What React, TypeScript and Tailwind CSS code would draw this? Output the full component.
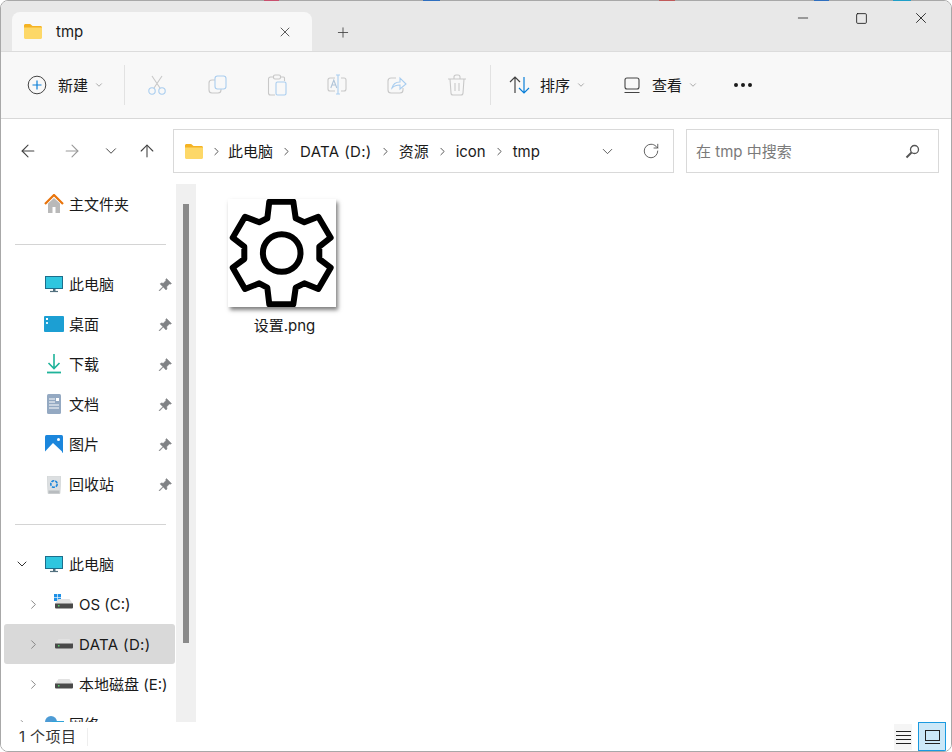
import { Plus, X, Minus, Square, ChevronRight, ChevronDown, ArrowLeft, ArrowRight, ArrowUp, RotateCw, MoreHorizontal } from 'lucide-react';
import type { ReactNode } from 'react';

const FolderIcon = () => (
  <svg width="18" height="15" viewBox="0 0 19 15" preserveAspectRatio="none">
    <path d="M0 1.500C0 .7.7 0 1.500 0h5L9 2h8.500c.8 0 1.500.7 1.500 1.500V6H0z" fill="#f5b323" />
    <path d="M0 3.500h19v10c0 .8-.7 1.500-1.500 1.500h-16C.7 15 0 14.300 0 13.500z" fill="#fdd868" />
  </svg>
);

const HomeIcon = () => (
  <svg width="20" height="20" viewBox="0 0 20 20">
    <path d="M4 9.500V19h4.500v-6h3v6H16V9.500L10 4z" fill="#b9b9b9" />
    <path d="M1 10l9-9 9 9" fill="none" stroke="#e9740c" strokeWidth="2.200" />
  </svg>
);

const MonitorIcon = () => (
  <svg width="20" height="17" viewBox="0 0 20 17">
    <rect x="1.500" y="0.500" width="17" height="12" fill="#2fc6df" stroke="#1c6e8c" />
    <path d="M9 13h2.500v2H9z" fill="#52707f" />
    <path d="M6 15.500h8" stroke="#52707f" strokeWidth="1.200" />
  </svg>
);

const DesktopIcon = () => (
  <svg width="20" height="16" viewBox="0 0 20 16">
    <rect width="20" height="16" rx="1" fill="#1c9fd3" />
    <rect x="2" y="2" width="2" height="2" fill="#fff" />
    <rect x="2" y="6" width="2" height="2" fill="#d8f2fb" />
  </svg>
);

const DownloadIcon = () => (
  <svg width="16" height="20" viewBox="0 0 16 20">
    <path d="M8 0v14M2.500 9L8 14.500 13.500 9" fill="none" stroke="#1fb39a" strokeWidth="1.600" />
    <path d="M1 18.500h14" stroke="#1fb39a" strokeWidth="1.800" />
  </svg>
);

const DocIcon = () => (
  <svg width="14" height="20" viewBox="0 0 14 20">
    <rect width="14" height="20" rx="1.500" fill="#94a9c2" />
    <path d="M2 5h6M2 8h6M2 11h10M2 14h10" stroke="#fff" strokeWidth="1" />
    <rect x="9" y="4" width="3" height="3" fill="#fff" />
  </svg>
);

const PictureIcon = () => (
  <svg width="18" height="18" viewBox="0 0 18 18">
    <rect width="18" height="18" rx="1.500" fill="#1b86dc" />
    <path d="M0 16.500L8 8l9 8.500V18H0z" fill="#fff" />
    <circle cx="13.500" cy="4.500" r="1.500" fill="#fff" />
  </svg>
);

const BinIcon = () => (
  <svg width="14" height="19" viewBox="0 0 14 19">
    <path d="M0 1.500h14L13 18.500H1z" fill="#dcdfe1" stroke="#c4c8ca" strokeWidth="0.500" />
    <path d="M1.500 15.500h11v3h-11z" fill="#b8bcbf" />
    <circle cx="7" cy="9" r="3.200" fill="none" stroke="#1b86dc" strokeWidth="1.600" strokeDasharray="3 1" />
  </svg>
);

const PinIcon = () => (
  <svg width="14" height="14" viewBox="0 0 14 14">
    <path d="M8.500.500l5 5-1.300.8-.8-.3-2.700 2.700.3 2.200-1 1L5.200 9 1.500 13 1 12.500 4.900 8.700 2.100 5.900l1-1 2.200.3L8 2.500l-.3-.8z" fill="#808285" stroke="#808285" strokeWidth="0.500" />
  </svg>
);

const DriveIcon = ({ win }: { win?: boolean }) => (
  <svg width="20" height="18" viewBox="0 0 20 18" className="overflow-visible">
    {win && (
      <g fill="#1e90e6">
        <rect x="0" y="-1" width="3.200" height="3.200" />
        <rect x="3.800" y="-1" width="3.200" height="3.200" />
        <rect x="0" y="2.800" width="3.200" height="3.200" />
        <rect x="3.800" y="2.800" width="3.200" height="3.200" />
      </g>
    )}
    <path d="M4.500 4h11L19 9H1z" fill="#e2e2e2" />
    <path d="M1 8.500h18v4a1 1 0 01-1 1H2a1 1 0 01-1-1z" fill="#4a4a4a" />
    <rect x="4" y="10" width="1.500" height="1.500" fill="#55d46a" />
  </svg>
);

const ToolGlyph = ({ children }: { children: ReactNode }) => (
  <svg width="20" height="22" viewBox="0 0 20 22" fill="none" strokeWidth="1.100">
    {children}
  </svg>
);

const NavRow = ({ icon, label, pin }: { icon: ReactNode; label: string; pin?: boolean }) => (
  <div className="flex h-10 items-center">
    <div className="flex w-[68px] shrink-0 justify-end pr-[5px]">
      <div className="flex w-5 justify-center">{icon}</div>
    </div>
    <span className="flex-1">{label}</span>
    {pin && (
      <span className="mr-1 flex w-[14px] justify-center">
        <PinIcon />
      </span>
    )}
  </div>
);

const DriveRow = ({ label, win, active, wide }: { label: string; win?: boolean; active?: boolean; wide?: boolean }) => (
  <div className={`ml-[3px] flex h-10 w-[171px] items-center rounded-[3px] ${active ? 'bg-[#d9d9d9]' : ''}`}>
    <ChevronRight size={15} strokeWidth={1.500} className="ml-[22px] text-[#808080]" />
    <div className="ml-[13px] flex w-5 justify-center">
      <DriveIcon win={win} />
    </div>
    <span className={`ml-[5px] whitespace-nowrap ${wide ? 'tracking-[0.35px]' : ''}`}>{label}</span>
  </div>
);

const Crumb = ({ label, wide }: { label: string; wide?: boolean }) => (
  <>
    <span className={wide ? 'tracking-[0.35px]' : ''}>{label}</span>
    <ChevronRight size={13} strokeWidth={1.800} className="mx-[7px] text-[#555]" />
  </>
);

// bits of the desktop that show above the window edge
const desktopBits = [
  'left-[264px] w-[15px] bg-[#c8506e]',
  'left-[423px] w-[17px] bg-[#2f6fbf]',
  'left-[659px] w-[16px] bg-[#c05a5a]',
  'left-[814px] w-[15px] bg-[#2f6fbf]',
  'left-[893px] w-[18px] bg-[#1f9fc8]',
];

export default function App() {
  return (
    <div className="relative h-[752px] w-[952px] overflow-hidden bg-white font-['Inter','Noto_Sans_CJK_SC',sans-serif] text-[15px] text-[#1a1a1a] [&_span]:pt-[2px]">
      {desktopBits.map((cls) => (
        <div key={cls} className={`absolute top-0 h-px ${cls}`} />
      ))}
      <div className="flex h-full flex-col overflow-hidden rounded-[8px] border border-[#a8a8a8]">
        {/* title bar */}
        <div className="flex h-[50px] shrink-0 items-end bg-[#e8e8e8] pl-[11px]">
          <div className="flex h-[39px] w-[300px] items-center rounded-t-[8px] bg-[#f8f8f8] pl-[12px]">
            <FolderIcon />
            <span className="ml-[14px] flex-1">tmp</span>
            <X size={16} strokeWidth={1.100} className="mr-[19px] text-[#222]" />
          </div>
          <div className="mb-[11px] ml-[23px] flex h-4 w-4 items-center justify-center">
            <Plus size={17} strokeWidth={1.300} className="text-[#444]" />
          </div>
          <div className="mb-[24px] ml-auto flex items-center text-[#111]">
            <Minus size={16} strokeWidth={1.100} className="mr-[44px]" />
            <Square size={13} strokeWidth={1.500} className="mr-[44px]" />
            <X size={18} strokeWidth={1.100} className="mr-[21px]" />
          </div>
        </div>

        {/* command bar */}
        <div className="flex h-[68px] shrink-0 items-center border-t border-b border-t-[#dcdcdc] border-b-[#d8d8d8] bg-[#f8f8f8]">
          <svg width="20" height="20" viewBox="0 0 20 20" className="ml-[26px]" fill="none">
            <circle cx="10" cy="10" r="8.800" stroke="#444" strokeWidth="1" />
            <path d="M10 5.500v9M5.500 10h9" stroke="#0a7fd8" strokeWidth="1.200" />
          </svg>
          <span className="ml-[11px]">新建</span>
          <ChevronDown size={10} strokeWidth={1.300} className="ml-[6px] text-[#666]" />
          <div className="ml-[20px] h-10 w-px bg-[#e2e2e2]" />
          <div className="ml-[22px] flex w-[350px] items-center">
            <div className="flex w-[20px] justify-center">
              <ToolGlyph>
                <path d="M5 2l8 12M15 2L7 14" stroke="#c8c8c8" />
                <circle cx="5" cy="17" r="3.200" stroke="#a9cdef" />
                <circle cx="15" cy="17" r="3.200" stroke="#a9cdef" />
              </ToolGlyph>
            </div>
            <div className="ml-[41px] flex w-[20px] justify-center">
              <ToolGlyph>
                <rect x="1" y="6" width="12" height="13" rx="3" stroke="#c8c8c8" />
                <rect x="7" y="2" width="11" height="13" rx="2.500" fill="#f8f8f8" stroke="#a9cdef" />
              </ToolGlyph>
            </div>
            <div className="ml-[39px] flex w-[20px] justify-center">
              <ToolGlyph>
                <path d="M7 3H3.500A2 2 0 001.500 5v14a2 2 0 002 2H8M13 3h3.500a1 1 0 011 1v3" stroke="#c8c8c8" />
                <rect x="6.500" y="1" width="7" height="4" rx="1.500" stroke="#c8c8c8" />
                <rect x="9" y="8" width="10" height="13" rx="1.500" stroke="#a9cdef" />
              </ToolGlyph>
            </div>
            <div className="ml-[40px] flex w-[20px] justify-center">
              <ToolGlyph>
                <path d="M8 4H3a2 2 0 00-2 2v9a2 2 0 002 2h5M14 4h3a2 2 0 012 2v9a2 2 0 01-2 2h-3" stroke="#c8c8c8" />
                <path d="M3.800 14l3-8 3 8M5 11h3.600" stroke="#b0c4d8" />
                <path d="M11 1.500v18M9 1h4M9 20h4" stroke="#a9cdef" />
              </ToolGlyph>
            </div>
            <div className="ml-[40px] flex w-[20px] justify-center">
              <ToolGlyph>
                <path d="M9 4H4a3 3 0 00-3 3v9a3 3 0 003 3h9a3 3 0 003-3v-2" stroke="#c8c8c8" />
                <path d="M5 14c1-4 4-6 8-6V4l6 6-6 5v-4c-3 0-6 1-8 3z" stroke="#a9cdef" />
              </ToolGlyph>
            </div>
            <div className="ml-[40px] flex w-[20px] justify-center">
              <ToolGlyph>
                <path d="M1 5h18M7 5V3a2 2 0 012-2h2a2 2 0 012 2v2M3 5l1 14a2 2 0 002 2h8a2 2 0 002-2l1-14M8 9v8M12 9v8" stroke="#c8c8c8" />
              </ToolGlyph>
            </div>
          </div>
          <div className="-ml-[7px] h-10 w-px bg-[#e2e2e2]" />
          <svg width="22" height="18" viewBox="0 0 22 18" className="ml-[18px]" fill="none" strokeWidth="1.200">
            <path d="M6 17V1M1 6l5-5 5 5" stroke="#444" />
            <path d="M15 1v16M10 12l5 5 5-5" stroke="#0a7fd8" />
          </svg>
          <span className="ml-[9px]">排序</span>
          <ChevronDown size={10} strokeWidth={1.300} className="ml-[6px] text-[#666]" />
          <svg width="18" height="17" viewBox="0 0 18 17" className="ml-[37px]" fill="none" stroke="#444" strokeWidth="1.100">
            <rect x="2" y="1" width="14" height="11" rx="2" />
            <path d="M1.500 15.500h15" />
          </svg>
          <span className="ml-[11px]">查看</span>
          <ChevronDown size={10} strokeWidth={1.300} className="ml-[6px] text-[#666]" />
          <MoreHorizontal size={24} strokeWidth={2} className="ml-[33px] text-[#1a1a1a]" />
        </div>

        {/* address row */}
        <div className="flex h-[65px] shrink-0 items-center pb-px">
          <ArrowLeft size={20} strokeWidth={1.300} className="ml-[17px] text-[#444]" />
          <ArrowRight size={20} strokeWidth={1.300} className="ml-[24px] text-[#999]" />
          <ChevronDown size={18} strokeWidth={1.300} className="ml-[20px] text-[#444]" />
          <ArrowUp size={20} strokeWidth={1.300} className="ml-[17px] text-[#444]" />
          <div className="ml-[16px] flex h-[44px] w-[501px] items-center border border-[#d9d9d9] pl-[11px]">
            <FolderIcon />
            <ChevronRight size={13} strokeWidth={1.800} className="ml-[7px] mr-[5px] text-[#555]" />
            <Crumb label="此电脑" />
            <Crumb label="DATA (D:)" wide />
            <Crumb label="资源" />
            <Crumb label="icon" />
            <span>tmp</span>
            <ChevronDown size={17} strokeWidth={1.200} className="ml-auto text-[#444]" />
            <RotateCw size={18} strokeWidth={1.100} className="ml-[26px] mr-[13px] text-[#444]" />
          </div>
          <div className="ml-[12px] flex h-[44px] w-[253px] items-center border border-[#d9d9d9] pl-[9px] text-[#7a7a7a]">
            <span className="flex-1">在 tmp 中搜索</span>
            <svg width="15" height="15" viewBox="0 0 15 15" className="mr-[18px]" fill="none" stroke="#555">
              <circle cx="9.500" cy="5.500" r="4" strokeWidth="1.300" />
              <path d="M6.500 8.500L1.500 13.500" strokeWidth="2" />
            </svg>
          </div>
        </div>

        {/* main */}
        <div className="flex min-h-0 flex-1">
          <div className="w-[175px] shrink-0 overflow-hidden">
            <NavRow icon={<HomeIcon />} label="主文件夹" />
            <div className="ml-[14px] my-[19.5px] h-px w-[151px] bg-[#d4d4d4]" />
            <NavRow icon={<MonitorIcon />} label="此电脑" pin />
            <NavRow icon={<DesktopIcon />} label="桌面" pin />
            <NavRow icon={<DownloadIcon />} label="下载" pin />
            <NavRow icon={<DocIcon />} label="文档" pin />
            <NavRow icon={<PictureIcon />} label="图片" pin />
            <NavRow icon={<BinIcon />} label="回收站" pin />
            <div className="ml-[14px] my-[19.5px] h-px w-[151px] bg-[#d4d4d4]" />
            <div className="flex h-10 items-center">
              <ChevronDown size={16} strokeWidth={1.500} className="ml-[13px] text-[#333]" />
              <div className="ml-[14px] flex w-5 justify-center">
                <MonitorIcon />
              </div>
              <span className="ml-[5px]">此电脑</span>
            </div>
            <DriveRow label="OS (C:)" win />
            <DriveRow label="DATA (D:)" active wide />
            <DriveRow label="本地磁盘 (E:)" />
            <div className="flex h-10 items-center">
              <ChevronRight size={14} strokeWidth={1.500} className="ml-[15px] text-[#808080]" />
              <svg width="20" height="18" viewBox="0 0 20 18" className="ml-[14px]">
                <circle cx="7" cy="7" r="6" fill="#4d9bd5" />
                <rect x="8" y="6" width="12" height="9" fill="#2fa3d8" />
              </svg>
              <span className="ml-[5px]">网络</span>
            </div>
          </div>

          <div className="flex w-5 shrink-0 justify-center bg-[#f0f0f0] pt-[20px]">
            <div className="h-[439px] w-[6px] bg-[#8a8a8a]" />
          </div>

          <div className="flex-1 pl-[32px] pt-[15px]">
            <div className="flex w-[108px] flex-col items-center">
              <div className="h-[108px] w-[108px] bg-white shadow-[2px_3px_4px_rgba(0,0,0,0.5)]">
                <svg width="108" height="108" viewBox="0 0 108 108" fill="none" stroke="#000" strokeWidth="6" strokeLinejoin="round">
                  <path d="M41.300 2.700H65.300L67.700 19.300L76.300 23.300L90.300 17.700L102.700 38.700L91.300 47.700V60L102.700 68.700L90.300 90L76.300 84.300L67.700 88.700L65.300 105.300H41.300L39.300 88.700L31.300 84.300L17 90L4.700 68.700L16.300 60V47.700L4.700 38.700L17 17.700L31.300 23.300L39.300 19.300Z" />
                  <circle cx="53.700" cy="54" r="18.800" />
                </svg>
              </div>
              <span className="ml-[5px] mt-[6px]">设置.png</span>
            </div>
          </div>
        </div>

        {/* status bar */}
        <div className="flex h-[29px] shrink-0 items-center bg-white">
          <span className="ml-[18px] tracking-[0.4px] text-[#333]">1 个项目</span>
          <div className="ml-[11px] h-[18px] w-px bg-[#eeeeee]" />
          <div className="ml-auto flex h-[26px] w-[18px] items-center justify-center bg-[#f5f5f5]">
            <svg width="15" height="14" viewBox="0 0 15 14" stroke="#222" strokeWidth="1">
              <path d="M0 1.500h15M0 5.500h15M0 9.500h15M0 13.500h15" />
            </svg>
          </div>
          <div className="ml-[6px] mr-[5px] flex h-[29px] w-[28px] items-center justify-center border border-[#1a9ae0] bg-[#cce8f8]">
            <svg width="15" height="14" viewBox="0 0 15 14" fill="none" stroke="#222" strokeWidth="1">
              <rect x="0.500" y="0.500" width="14" height="10" />
              <path d="M0 13.500h15" />
            </svg>
          </div>
        </div>
      </div>
    </div>
  );
}
